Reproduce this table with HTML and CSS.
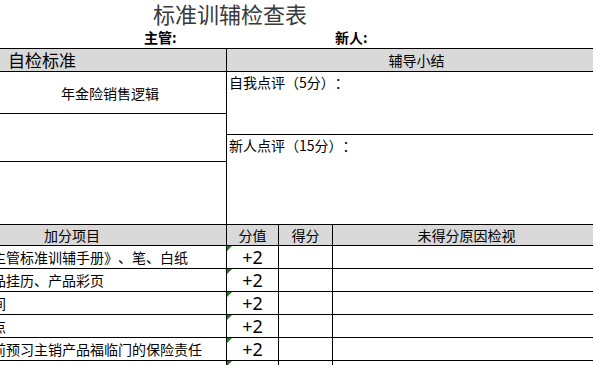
FILE: index.html
```html
<!DOCTYPE html>
<html lang="zh">
<head>
<meta charset="utf-8">
<title>标准训辅检查表</title>
<link rel="stylesheet" href="styles.css">
</head>
<body>
<div class="sheet">
  <div class="title">标准训辅检查表</div>
  <div class="names">
    <span class="lbl lbl-sup">主管:</span>
    <span class="lbl lbl-new">新人:</span>
  </div>
  <div class="top">
    <div class="hd hd-left">自检标准</div>
    <div class="hd hd-right">辅导小结</div>
    <div class="col-left">
      <div class="cell r1">年金险销售逻辑</div>
      <div class="cell r2"></div>
      <div class="cell r3"></div>
    </div>
    <div class="col-right">
      <div class="cell s1">自我点评（5分）：</div>
      <div class="cell s2">新人点评（15分）：</div>
    </div>
  </div>
  <div class="bottom">
    <div class="bh bh-item">加分项目</div>
    <div class="bh">分值</div>
    <div class="bh">得分</div>
    <div class="bh bh-last">未得分原因检视</div>

    <div class="bc item"><span>《主管标准训辅手册》、笔、白纸</span></div>
    <div class="bc val">+2</div>
    <div class="bc"></div>
    <div class="bc last"></div>

    <div class="bc item"><span>产品挂历、产品彩页</span></div>
    <div class="bc val">+2</div>
    <div class="bc"></div>
    <div class="bc last"></div>

    <div class="bc item"><span>时间</span></div>
    <div class="bc val">+2</div>
    <div class="bc"></div>
    <div class="bc last"></div>

    <div class="bc item"><span>地点</span></div>
    <div class="bc val">+2</div>
    <div class="bc"></div>
    <div class="bc last"></div>

    <div class="bc item"><span>会前预习主销产品福临门的保险责任</span></div>
    <div class="bc val">+2</div>
    <div class="bc"></div>
    <div class="bc last"></div>

    <div class="bc item"><span></span></div>
    <div class="bc val"></div>
    <div class="bc"></div>
    <div class="bc last"></div>
  </div>
</div>
</body>
</html>
```

FILE: styles.css
```css
html, body {
  margin: 0;
  padding: 0;
  background: #ffffff;
  overflow: hidden;
}

body {
  width: 593px;
  height: 365px;
  font-family: "Noto Sans CJK SC", "Noto Sans", sans-serif;
  color: #000;
  text-spacing-trim: space-all;
}

.sheet {
  width: 600px;
  height: 365px;
  overflow: hidden;
}

.title {
  height: 28px;
  padding-left: 153px;
  font-size: 22px;
  line-height: 27px;
  color: #3a3a3a;
}

.names {
  height: 20px;
  position: relative;
  font-size: 14px;
  font-weight: bold;
  line-height: 20px;
}

.lbl-sup {
  position: absolute;
  left: 144px;
  top: -1px;
}

.lbl-new {
  position: absolute;
  left: 335px;
  top: -1px;
}

/* top section */
.top {
  display: grid;
  grid-template-columns: 227px 1fr;
  border-top: 1px solid #000;
  font-size: 14px;
}

.hd {
  height: 22px;
  background: #d9d9d9;
  border-bottom: 1px solid #000;
  line-height: 22px;
}

.hd-left {
  border-right: 1px solid #000;
  padding-left: 8px;
  font-size: 17px;
}

.hd-right {
  text-align: center;
  padding-left: 6px;
  font-size: 14px;
}

.col-left {
  border-right: 1px solid #000;
  display: flex;
  flex-direction: column;
}

.col-right {
  display: flex;
  flex-direction: column;
}

.cell {
  border-bottom: 1px solid #000;
}

.r1 {
  height: 41px;
  line-height: 42px;
  text-align: center;
  padding-right: 6px;
}

.r2 {
  height: 47px;
}

.r3 {
  height: 62px;
}

.s1 {
  height: 62px;
  padding-left: 2px;
  line-height: 20px;
}

.s2 {
  height: 89px;
  padding-left: 2px;
  line-height: 20px;
}

/* bottom section */
.bottom {
  display: grid;
  grid-template-columns: 227px 52px 54px 1fr;
  grid-template-rows: 21px;
  grid-auto-rows: 23px;
  font-size: 14px;
}

.bh {
  background: #d9d9d9;
  border-right: 1px solid #000;
  border-bottom: 1px solid #000;
  text-align: center;
  line-height: 20px;
}

.bh-item {
  padding-right: 82px;
}

.bh-last {
  border-right: none;
}

.bc {
  border-right: 1px solid #000;
  border-bottom: 1px solid #000;
  line-height: 22px;
  white-space: nowrap;
  overflow: hidden;
  position: relative;
}

.bc.last {
  border-right: none;
}

.item span {
  display: block;
  margin-left: -22px;
}

.val {
  text-align: center;
  font-family: "Noto Sans", "DejaVu Sans", sans-serif;
  font-size: 18px;
  line-height: 22px;
}

.val::before {
  content: "";
  position: absolute;
  left: 0;
  top: 0;
  border-top: 5px solid #1e7b1e;
  border-right: 5px solid transparent;
}
```
